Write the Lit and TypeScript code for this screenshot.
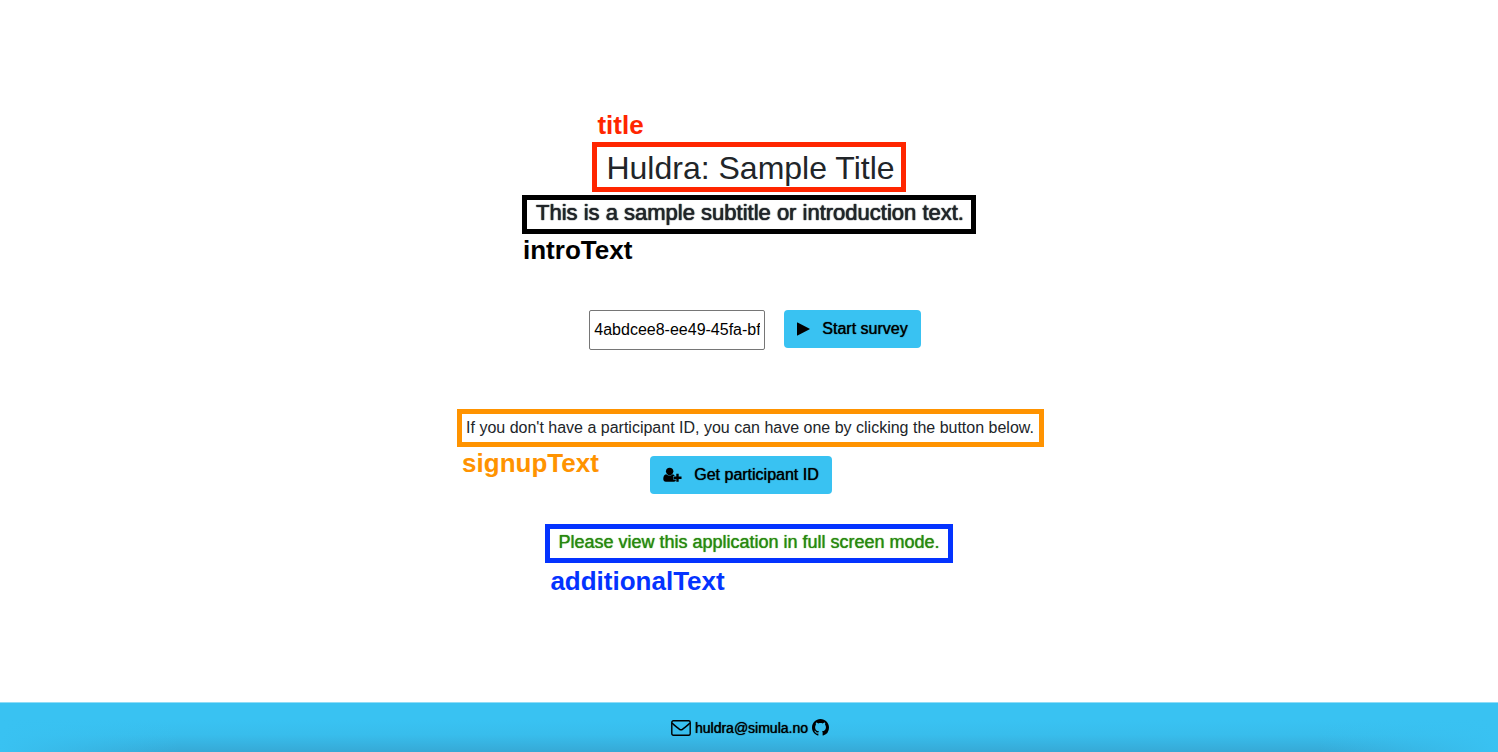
import { LitElement, html, css, svg } from "lit";
import { customElement, property, state } from "lit/decorators.js";

const playIcon = svg`<svg class="play" viewBox="0 0 14 14" aria-hidden="true"><path d="M0 .3v13.400c0 .3.3.5.6.3L13.600 7.400c.3-.2.3-.6 0-.8L.6 0C.3-.1 0 0 0 .3z"/></svg>`;
const userPlusIcon = svg`<svg class="user" viewBox="0 0 20 16" aria-hidden="true"><path d="M7 8.400c2.200 0 3.900-2 3.900-4.300S9.300.4 7 .4 3.100 1.800 3.100 4.100 4.800 8.400 7 8.400z"/><path d="M3.400 7.200C1.200 7.500 .3 9.500 .3 12.200c0 1.700 1 2.800 2.700 2.800h8.500c.8 0 1.400-.2 1.900-.7v-1.600h-2.700V9.100h1.600c-.5-1.100-1.200-1.800-2.100-1.900-.8.9-1.900 1.500-3.200 1.500s-2.700-.6-3.600-1.500z"/><path d="M14 6.800h2.500v2.900h3v2.500h-3v2.900H14v-2.900h-2.900V9.700H14z"/></svg>`;
const mailIcon = svg`<svg class="mail" viewBox="0 0 20 16" fill="none" stroke="currentColor" stroke-width="1.400" aria-hidden="true"><rect x=".8" y=".8" width="18.400" height="14.400" rx="1.500"/><path d="M1 3c2.200 2.400 5 4.200 7.300 6.100 1.100.9 2.300.9 3.400 0C14 7.200 16.800 5.400 19 3"/></svg>`;
const githubIcon = svg`<svg class="github" viewBox="0 0 16 16" aria-hidden="true"><path d="M8 0C3.580 0 0 3.580 0 8c0 3.540 2.290 6.530 5.470 7.590.4.070.55-.17.55-.38 0-.19-.01-.82-.01-1.490-2.010.37-2.530-.49-2.690-.94-.09-.23-.48-.94-.82-1.130-.28-.15-.68-.52-.01-.53.63-.01 1.080.58 1.230.82.72 1.210 1.870.87 2.330.66.07-.52.28-.87.51-1.070-1.780-.2-3.640-.89-3.640-3.950 0-.87.31-1.590.82-2.150-.08-.2-.36-1.020.08-2.120 0 0 .67-.21 2.200.82.64-.18 1.320-.27 2-.27s1.360.09 2 .27c1.530-1.040 2.200-.82 2.200-.82.44 1.100.16 1.920.08 2.120.51.56.82 1.270.82 2.150 0 3.070-1.870 3.750-3.650 3.950.29.25.54.73.54 1.480 0 1.070-.01 1.930-.01 2.200 0 .21.15.46.55.38A8.010 8.010 0 0 0 16 8c0-4.420-3.580-8-8-8z"/></svg>`;

@customElement("annotated-box")
class AnnotatedBox extends LitElement {
  @property() label = "";

  static styles = css`
    :host {
      display: block;
      position: relative;
      box-sizing: border-box;
      border: 5px solid var(--mark);
    }
    .label {
      position: absolute;
      left: var(--label-left, 0);
      top: var(--label-top, 100%);
      color: var(--mark);
      font-size: 26px;
      font-weight: 700;
      line-height: 32px;
      padding-top: var(--label-gap, 5px);
      white-space: nowrap;
    }
  `;

  render() {
    return html`<slot></slot><span class="label">${this.label}</span>`;
  }
}

@customElement("app-root")
class AppRoot extends LitElement {
  @state() private participant = "4abdcee8-ee49-45fa-bf";

  static styles = css`
    :host {
      display: flex;
      flex-direction: column;
      min-height: 100vh;
      background: #fff;
      color: #212529;
      font-family: "Liberation Sans", Arial, Helvetica, sans-serif;
      font-size: 16px;
      line-height: 24px;
      --heavier: 0 0 1px currentColor, 0 0 1px currentColor;
    }
    main {
      flex: 1;
      display: flex;
      flex-direction: column;
      align-items: center;
      padding: 142px 0 60px;
    }
    h1, h2, p { margin: 0; font-weight: 400; }
    .title { --mark: #ff2600; --label-top: -38px; --label-gap: 0; padding: 2px 6px 0 9px; }
    .title h1 { font-size: 32px; line-height: 38px; }
    .intro { --mark: #000; --label-left: -4px; margin-top: 3px; padding: 0 7px 3px 9px; }
    .intro h2 { font-size: 22px; line-height: 26px; text-shadow: var(--heavier); }
    form {
      display: flex;
      align-items: flex-start;
      gap: 19px;
      margin-top: 76px;
      padding-left: 12px;
    }
    input {
      box-sizing: border-box;
      width: 176px;
      height: 40px;
      padding: 1px 4px;
      border: 1px solid #767676;
      border-radius: 2px;
      background: #fff;
      color: #000;
      font: inherit;
    }
    button {
      display: flex;
      align-items: center;
      gap: 12px;
      height: 38px;
      padding: 0 13px;
      border: 0;
      border-radius: 4px;
      background: #39c2f2;
      color: #000;
      font: inherit;
      text-shadow: 0 0 1px currentColor;
    }
    svg { display: block; flex: none; fill: currentColor; }
    svg.play { width: 13px; height: 14px; }
    svg.user { width: 19px; height: 16px; }
    svg.mail { width: 20px; height: 16px; fill: none; }
    svg.github { width: 17px; height: 17px; }
    .signup { --mark: #ff9300; margin: 59px 0 0 3px; padding: 2px 5px 2px 4px; }
    .signin { margin-top: 9px; padding-right: 16px; }
    .extra { --mark: #0433ff; --label-gap: 7px; margin-top: 30px; padding: 1px 8px 4px 8px; color: #28890f; }
    .extra p { font-size: 18px; text-shadow: 0 0 1px currentColor; }
    footer {
      display: flex;
      align-items: center;
      justify-content: center;
      gap: 4px;
      box-sizing: border-box;
      height: 50px;
      padding-left: 2px;
      border-top: 1px solid #8fdcf7;
      background:
        linear-gradient(90deg, #39c2f2, #39c2f200 12%, #39c2f200 88%, #39c2f2),
        linear-gradient(#39c2f2 35%, #38bdec 65%, #36a9d6);
      color: #000;
      font-size: 14px;
    }
    footer a { display: flex; align-items: center; gap: 4px; color: inherit; text-decoration: none; text-shadow: 0 0 1px currentColor; }
  `;

  render() {
    return html`
      <main>
        <annotated-box class="title" label="title"><h1>Huldra: Sample Title</h1></annotated-box>
        <annotated-box class="intro" label="introText"><h2>This is a sample subtitle or introduction text.</h2></annotated-box>
        <form @submit=${(e: Event) => e.preventDefault()}>
          <input
            type="text"
            aria-label="Participant ID"
            .value=${this.participant}
            @input=${(e: Event) => (this.participant = (e.target as HTMLInputElement).value)}
          />
          <button type="submit">${playIcon}Start survey</button>
        </form>
        <annotated-box class="signup" label="signupText"><p>If you don't have a participant ID, you can have one by clicking the button below.</p></annotated-box>
        <div class="signin"><button type="button">${userPlusIcon}Get participant ID</button></div>
        <annotated-box class="extra" label="additionalText"><p>Please view this application in full screen mode.</p></annotated-box>
      </main>
      <footer>
        <a href="mailto:huldra@simula.no">${mailIcon}huldra@simula.no</a>
        <a href="#github" aria-label="GitHub">${githubIcon}</a>
      </footer>
    `;
  }
}
